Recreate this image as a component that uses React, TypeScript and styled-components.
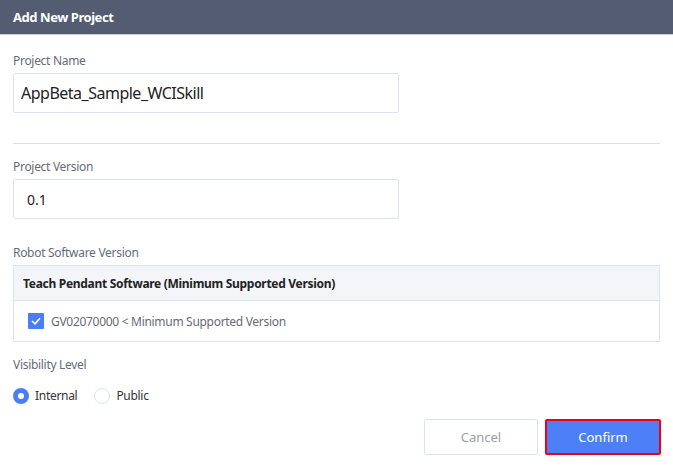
import React, { useState } from "react";
import styled, { createGlobalStyle } from "styled-components";

const GlobalStyle = createGlobalStyle`
  html, body {
    margin: 0;
    padding: 0;
    background: #ffffff;
    font-family: "Noto Sans", "Open Sans", sans-serif;
  }
  * {
    box-sizing: border-box;
  }
`;

const Dialog = styled.div`
  width: 673px;
  height: 476px;
  background: #fff;
  display: flex;
  flex-direction: column;
`;

const Header = styled.div`
  height: 35px;
  background: #535c70;
  border-bottom: 1px solid #c9cdd6;
  color: #fff;
  font-size: 13px;
  font-weight: 700;
  letter-spacing: -0.45px;
  display: flex;
  align-items: center;
  padding-left: 13px;
`;

const Body = styled.div`
  padding: 0 13px;
  display: flex;
  flex-direction: column;
`;

const Label = styled.div<{ $top: number }>`
  margin-top: ${(p) => p.$top}px;
  font-size: 12px;
  letter-spacing: -0.3px;
  color: #666b75;
  height: 16px;
  line-height: 16px;
`;

const TextInput = styled.input<{ $big?: boolean }>`
  margin-top: 4px;
  width: 386px;
  height: 40px;
  border: 1px solid #dde3ec;
  border-radius: 2px;
  padding: 0 ${(p) => (p.$big ? "7px" : "13px")};
  font-family: inherit;
  font-size: ${(p) => (p.$big ? "16px" : "14px")};
  letter-spacing: ${(p) => (p.$big ? "-0.5px" : "0")};
  color: #222;
  outline: none;
`;

const Divider = styled.hr`
  margin: 30px 0 0;
  border: none;
  border-top: 1px solid #dcdfe6;
  width: 647px;
`;

const Table = styled.div`
  margin-top: 4px;
  width: 647px;
  border: 1px solid #dde3ec;
`;

const TableHead = styled.div`
  height: 35px;
  background: #f3f5f9;
  border-bottom: 1px solid #dde3ec;
  display: flex;
  align-items: center;
  padding-left: 9px;
  font-size: 12px;
  letter-spacing: -0.3px;
  font-weight: 700;
  color: #222;
`;

const TableRow = styled.div`
  height: 40px;
  display: flex;
  align-items: center;
  padding-left: 14px;
  gap: 7px;
  font-size: 12px;
  letter-spacing: -0.3px;
  color: #666b75;
`;

const CheckBox = styled.span`
  width: 16px;
  height: 16px;
  background: #4a7ef5;
  border-radius: 1px;
  display: flex;
  align-items: center;
  justify-content: center;
`;

const RadioGroup = styled.div`
  margin-top: 14px;
  display: flex;
  align-items: center;
  gap: 17px;
`;

const RadioOption = styled.label`
  display: flex;
  align-items: center;
  gap: 6px;
  font-size: 12px;
  letter-spacing: -0.3px;
  color: #333;
  cursor: pointer;
`;

const RadioDot = styled.span<{ $on: boolean }>`
  width: 16px;
  height: 16px;
  border-radius: 50%;
  border: ${(p) => (p.$on ? "5px solid #4a7ef5" : "1px solid #dde3ec")};
  background: #fff;
`;

const Footer = styled.div`
  margin-top: 15px;
  display: flex;
  justify-content: flex-end;
  gap: 7px;
  padding-right: 12px;
`;

const Button = styled.button<{ $primary?: boolean }>`
  width: ${(p) => (p.$primary ? "116px" : "114px")};
  height: 36px;
  font-family: inherit;
  font-size: 13px;
  border-radius: 2px;
  cursor: pointer;
  border: ${(p) => (p.$primary ? "2px solid #f0000f" : "1px solid #dde3ec")};
  background: ${(p) => (p.$primary ? "#4d7ff6" : "#fff")};
  color: ${(p) => (p.$primary ? "#fff" : "#9aa0aa")};
`;

export default function App() {
  const [visibility, setVisibility] = useState<"internal" | "public">("internal");
  return (
    <>
      <GlobalStyle />
      <Dialog>
        <Header>Add New Project</Header>
        <Body>
          <Label $top={18}>Project Name</Label>
          <TextInput $big defaultValue="AppBeta_Sample_WCISkill" />
          <Divider />
          <Label $top={15}>Project Version</Label>
          <TextInput defaultValue="0.1" />
          <Label $top={26}>Robot Software Version</Label>
          <Table>
            <TableHead>Teach Pendant Software (Minimum Supported Version)</TableHead>
            <TableRow>
              <CheckBox>
                <svg width="10" height="8" viewBox="0 0 10 8">
                  <path d="M1 4 L4 6.8 L9 1.2" fill="none" stroke="#fff" strokeWidth="1.6" />
                </svg>
              </CheckBox>
              GV02070000 &lt; Minimum Supported Version
            </TableRow>
          </Table>
          <Label $top={15}>Visibility Level</Label>
          <RadioGroup>
            <RadioOption onClick={() => setVisibility("internal")}>
              <RadioDot $on={visibility === "internal"} />
              Internal
            </RadioOption>
            <RadioOption onClick={() => setVisibility("public")}>
              <RadioDot $on={visibility === "public"} />
              Public
            </RadioOption>
          </RadioGroup>
        </Body>
        <Footer>
          <Button>Cancel</Button>
          <Button $primary>Confirm</Button>
        </Footer>
      </Dialog>
    </>
  );
}
